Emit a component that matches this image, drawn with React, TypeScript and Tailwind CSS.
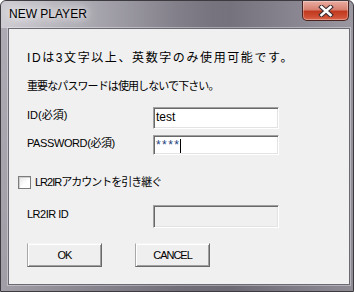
import React from 'react';

const font = "font-['Liberation_Sans','Noto_Sans_CJK_JP',sans-serif]";
const sunken =
  'border border-t-[#a0a0a0] border-l-[#a0a0a0] border-b-white border-r-white shadow-[inset_1px_1px_0_#696969,inset_-1px_-1px_0_#e3e3e3]';
const raised =
  'border border-t-[#f4f4f4] border-l-[#a8a8a8] border-b-[#696969] border-r-[#696969] shadow-[inset_1px_1px_0_#ffffff,inset_-1px_-1px_0_#a0a0a0] bg-[#efefef]';

function CloseButton() {
  return (
    <div className="w-[47px] h-[20px] rounded-b-[5px] border border-t-0 border-[#4a2320] bg-[linear-gradient(180deg,#e9ada1_0%,#d88172_45%,#c13a1f_55%,#cf5036_85%,#dc6a50_100%)] shadow-[inset_0_0_0_1px_rgba(255,255,255,0.3)] flex items-center justify-center">
      <svg width="16" height="12" viewBox="0 0 16 12">
        <path d="M3.5 2 L12.5 10 M12.5 2 L3.5 10" stroke="#3a2b2e" strokeWidth="4.6" strokeLinecap="square" />
        <path d="M3.5 2 L12.5 10 M12.5 2 L3.5 10" stroke="#ffffff" strokeWidth="2.6" strokeLinecap="square" />
      </svg>
    </div>
  );
}

export default function App() {
  return (
    <div className={`w-[354px] h-[292px] flex flex-col rounded-t-[6px] border border-[#3d3a40] bg-[linear-gradient(90deg,#aeabb4_0%,#98959f_20%,#7a7782_50%,#75727d_65%,#8a8792_85%,#9a97a1_100%)] overflow-hidden ${font}`}>
      <div className="h-[27px] flex items-start justify-between pl-[8px] pr-[4px] bg-[linear-gradient(90deg,rgba(255,255,255,0.4)_0%,rgba(255,255,255,0.18)_30%,rgba(255,255,255,0)_60%)]">
        <div className="pt-[7px] text-[12px] leading-[12px] text-black [text-shadow:0_0_6px_rgba(255,255,255,0.95),0_0_12px_rgba(255,255,255,0.85),0_0_16px_rgba(255,255,255,0.6)]">
          NEW PLAYER
        </div>
        <CloseButton />
      </div>
      <div className="flex-1 pl-[7px] pr-[3px] pb-[6px] bg-[linear-gradient(180deg,rgba(0,0,0,0)_0%,rgba(20,10,20,0.08)_100%)]">
        <div className="h-full border border-[#6b6973] shadow-[0_0_0_1px_rgba(255,255,255,0.35)] bg-[#f0f0f0] text-black">
          <div className="pl-[18px] flex flex-col">
            <div className="mt-[23px] text-[12px] leading-[12px] tracking-[1.6px] whitespace-nowrap">
              IDは3文字以上、英数字のみ使用可能です。
            </div>
            <div className="mt-[16px] text-[11px] leading-[12px] tracking-[-0.9px] whitespace-nowrap">
              重要なパスワードは使用しないで下さい。
            </div>

            <div className="mt-[15px] flex items-start">
              <div className="w-[126px] pt-[2px] text-[11px] leading-[12px]">ID(必須)</div>
              <div className={`w-[126px] h-[22px] bg-white pl-[2px] pt-[3px] text-[12px] leading-[12px] ${sunken}`}>
                test
              </div>
            </div>

            <div className="mt-[6px] flex items-start">
              <div className="w-[126px] pt-[2px] text-[11px] leading-[12px] tracking-[-0.4px]">PASSWORD(必須)</div>
              <div className={`w-[126px] h-[20px] bg-white pl-[2px] flex items-start ${sunken}`}>
                <span className="pt-[3px] text-[12px] leading-[12px] tracking-[1.4px] text-[#22407e]">****</span>
                <span className="mt-[3px] w-[1px] h-[14px] bg-black" />
              </div>
            </div>

            <div className="mt-[21px] -ml-[9px] flex items-center gap-[4px]">
              <div className="w-[13px] h-[13px] border border-[#7c7c7c] bg-[linear-gradient(135deg,#e6e6e6_0%,#ffffff_60%)] shadow-[inset_1px_1px_0_#d0d0d0]" />
              <div className="text-[11px] leading-[13px] tracking-[-1px] whitespace-nowrap">LR2IRアカウントを引き継ぐ</div>
            </div>

            <div className="mt-[16px] flex items-start">
              <div className="w-[126px] pt-[3px] text-[11px] leading-[12px] tracking-[-0.5px]">LR2IR ID</div>
              <div className={`w-[126px] h-[23px] bg-[#f0f0f0] ${sunken}`} />
            </div>

            <div className="mt-[15px] flex items-start gap-[33px]">
              <button className={`w-[75px] h-[24px] text-[11px] leading-[12px] tracking-[-1px] text-black ${raised}`}>
                OK
              </button>
              <button className={`w-[75px] h-[24px] text-[11px] leading-[12px] tracking-[-1px] text-black ${raised}`}>
                CANCEL
              </button>
            </div>
          </div>
        </div>
      </div>
    </div>
  );
}
